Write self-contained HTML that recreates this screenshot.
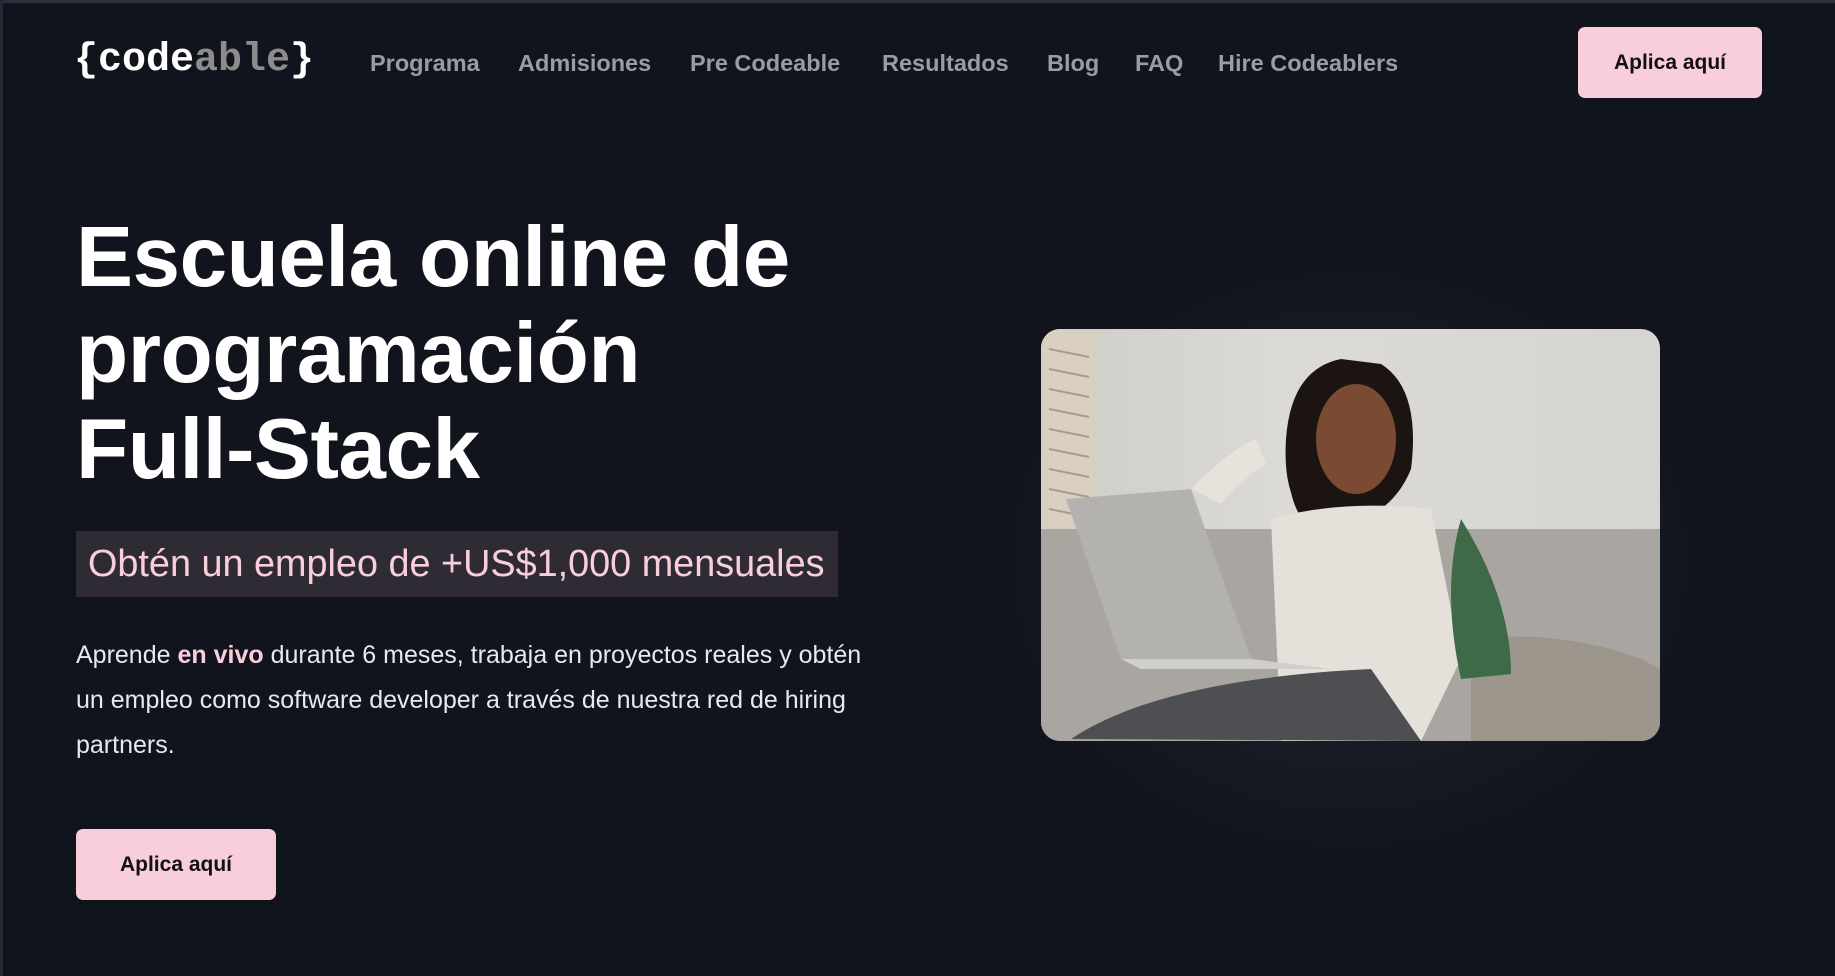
<!DOCTYPE html>
<html><head><meta charset="utf-8"><style>
*{margin:0;padding:0;box-sizing:border-box}
body{width:1835px;height:976px;overflow:hidden;background:#12141d;font-family:"Liberation Sans",sans-serif;position:relative}
.topb{position:absolute;left:0;top:0;width:1835px;height:3px;background:#2c2f3d}
.leftb{position:absolute;left:0;top:0;width:3px;height:976px;background:#262935}
.logo{position:absolute;left:74px;top:36px;font-family:"Liberation Mono",monospace;font-weight:bold;font-size:40px;color:#fff;letter-spacing:0;line-height:50px}
.logo .a{color:#8c8c8c}
.nav a{position:absolute;top:49px;color:#9b9ca1;font-size:23.5px;font-weight:bold;text-decoration:none;line-height:28px}
.btn{position:absolute;background:#f9cedb;border-radius:7px;color:#111;font-weight:bold;font-size:21px;display:flex;align-items:center;justify-content:center}
h1{position:absolute;left:76px;top:210px;color:#fff;font-size:85.5px;line-height:96px;font-weight:bold;letter-spacing:-0.5px;white-space:nowrap}
.hl{position:absolute;left:76px;top:531px;width:762px;height:66px;background:#2f2b35;color:#f9cedb;font-size:37.8px;line-height:66px;padding-left:12px;white-space:nowrap}
p{position:absolute;left:76px;top:633px;width:900px;color:#e9e9ec;font-size:25px;line-height:45px;white-space:nowrap}
p b{color:#f9cedb}
.glow{position:absolute;left:950px;top:220px;width:800px;height:680px;background:radial-gradient(ellipse at center,rgba(60,64,82,.35),rgba(18,20,29,0) 65%)}
.img{position:absolute;left:1041px;top:329px;width:619px;height:412px;border-radius:19px;overflow:hidden;background:linear-gradient(90deg,#cfcdc6,#dcdad6 40%,#d6d5d1)}
</style></head><body>
<div class="topb"></div><div class="leftb"></div>
<div class="logo">{code<span class="a">able</span>}</div>
<div class="nav">
<a style="left:370px">Programa</a>
<a style="left:518px">Admisiones</a>
<a style="left:690px">Pre Codeable</a>
<a style="left:882px">Resultados</a>
<a style="left:1047px">Blog</a>
<a style="left:1135px">FAQ</a>
<a style="left:1218px">Hire Codeablers</a>
</div>
<div class="btn" style="left:1578px;top:27px;width:184px;height:71px">Aplica aquí</div>
<h1>Escuela online de<br>programación<br>Full-Stack</h1>
<div class="hl">Obtén un empleo de +US$1,000 mensuales</div>
<p>Aprende <b>en vivo</b> durante 6 meses, trabaja en proyectos reales y obtén<br>un empleo como software developer a través de nuestra red de hiring<br>partners.</p>
<div class="btn" style="left:76px;top:829px;width:200px;height:71px">Aplica aquí</div>
<div class="glow"></div>
<div class="img">
<svg width="619" height="412" viewBox="0 0 619 412">
<rect x="0" y="0" width="55" height="200" fill="#d9cfc0"/>
<g stroke="#a89c8a" stroke-width="2">
<line x1="8" y1="20" x2="48" y2="28"/><line x1="8" y1="40" x2="48" y2="48"/><line x1="8" y1="60" x2="48" y2="68"/><line x1="8" y1="80" x2="48" y2="88"/><line x1="8" y1="100" x2="48" y2="108"/><line x1="8" y1="120" x2="48" y2="128"/><line x1="8" y1="140" x2="48" y2="148"/><line x1="8" y1="160" x2="48" y2="168"/><line x1="8" y1="180" x2="48" y2="188"/>
</g>
<rect x="0" y="200" width="619" height="212" fill="#a9a6a1"/>
<path d="M430 310 Q520 300 600 330 L619 340 L619 412 L430 412Z" fill="#9c958c"/>
<path d="M280 210 Q320 150 330 90 Q280 60 250 120 Q240 180 280 210Z" fill="#1e1713"/>
<path d="M300 30 Q250 40 245 110 Q240 190 290 200 Q350 190 370 140 Q380 60 340 35Z" fill="#1b1410"/>
<ellipse cx="315" cy="110" rx="40" ry="55" fill="#7a4a32"/>
<path d="M230 190 Q300 170 390 180 L420 330 L380 412 L240 412Z" fill="#e3e1da"/>
<path d="M150 160 Q190 120 215 110 L225 135 Q200 150 180 175Z" fill="#e6e3dc"/>
<path d="M420 190 Q470 270 470 345 L420 350 Q400 260 420 190Z" fill="#3e6a48"/>
<path d="M30 410 Q120 350 330 340 L380 412Z" fill="#4e4f52"/>
<path d="M25 170 L150 160 L210 330 L80 330Z" fill="#b4b2ae"/>
<path d="M80 330 L210 330 L290 340 L100 340Z" fill="#d0cfcb"/>
</svg>
</div>
</body></html>
